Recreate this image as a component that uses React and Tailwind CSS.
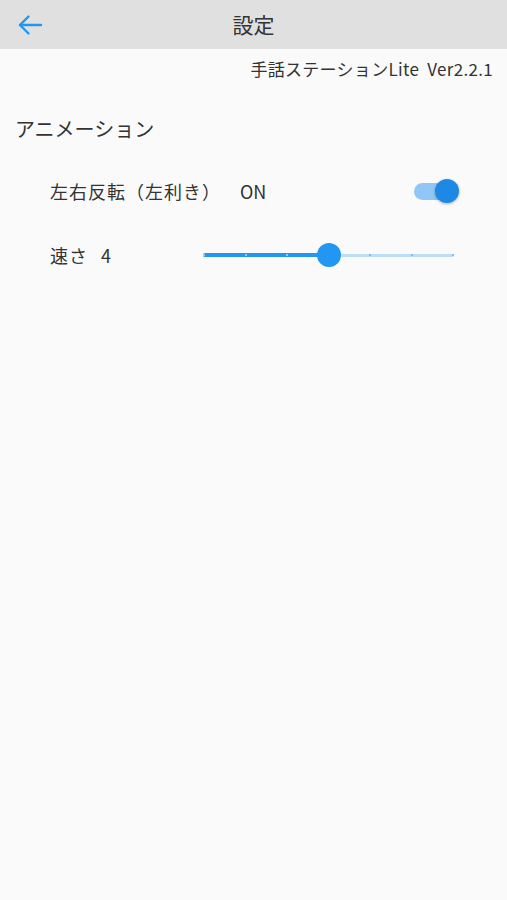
import React from "react";

const font = { fontFamily: '"Noto Sans CJK JP", "Noto Sans", sans-serif' };

export default function App() {
  const ticks = [0, 1, 2, 3, 4, 5, 6];
  const value = 3;
  return (
    <div className="w-[507px] h-[900px] bg-[#fafafa] text-[#333]" style={font}>
      <div className="h-[49px] bg-[#e0e0e0] flex items-center relative">
        <div className="absolute left-[17px] top-[13px] w-[26px] h-[24px] flex items-center justify-center">
          <svg width="26" height="22" viewBox="0 0 26 22" fill="none" stroke="#2196f3" strokeWidth="2.4" strokeLinecap="round" strokeLinejoin="round">
            <path d="M24 11H3" />
            <path d="M11.5 2.5L3 11l8.5 8.5" />
          </svg>
        </div>
        <div className="flex-1 text-center text-[21px] text-[#333] leading-none">設定</div>
      </div>
      <div className="flex justify-end pr-[14px] pt-[9px] text-[17px] leading-[22px] text-[#333] tracking-[0.3px]">
        <span>手話ステーションLite&nbsp;&nbsp;Ver2.2.1</span>
      </div>
      <div className="pl-[15px] pt-[36px] text-[20px] leading-[26px]">アニメーション</div>
      <div className="flex items-center pl-[50px] pr-[49px] mt-[29px] h-[40px]">
        <div className="flex-1 text-[18px] leading-none">
          <span className="tracking-[1px]">左右反転（左利き）</span>
          <span className="ml-[19px]">ON</span>
        </div>
        <div className="relative w-[44px] h-[26px] flex items-center">
          <div className="w-[40px] h-[17px] rounded-full bg-[#90c7f6]" />
          <div className="absolute right-[-1px] top-[1px] w-[24px] h-[24px] rounded-full bg-[#1e88e5] shadow-[0_1px_3px_rgba(0,0,0,0.3)]" />
        </div>
      </div>
      <div className="flex items-center pl-[50px] mt-[24px] h-[40px]">
        <div className="w-[153px] text-[18px] leading-none">
          <span className="tracking-[1px]">速さ</span>
          <span className="ml-[13px]">4</span>
        </div>
        <div className="relative w-[251px] h-[26px]">
          <div className="absolute left-0 right-0 top-[11.5px] h-[3px] rounded-full bg-[#bbdefb]" />
          <div className="absolute left-0 top-[11px] h-[4px] rounded-full bg-[#2196f3]" style={{ width: `${(value / 6) * 249 + 1}px` }} />
          {ticks.map((t) => (
            <div
              key={t}
              className={"absolute top-[12px] w-[2px] h-[2px] rounded-full " + (t <= value ? "bg-[#bbdefb]" : "bg-[#64b5f6]")}
              style={{ left: `${(t / 6) * 249}px` }}
            />
          ))}
          <div className="absolute top-[1px] w-[24px] h-[24px] rounded-full bg-[#2196f3]" style={{ left: `${(value / 6) * 249 - 11}px` }} />
        </div>
      </div>
    </div>
  );
}
